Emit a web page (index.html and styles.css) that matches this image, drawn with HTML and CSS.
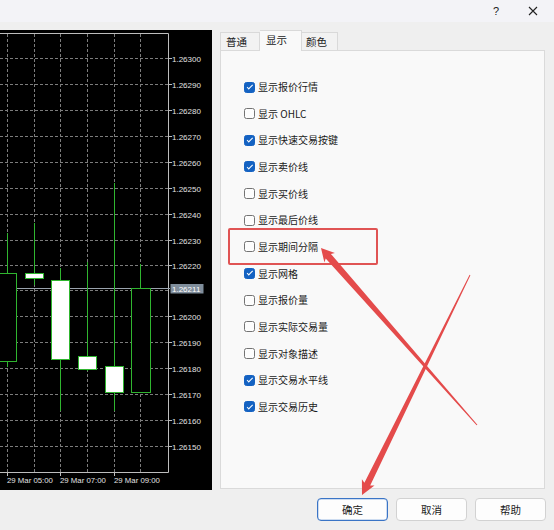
FILE: index.html
```html
<!DOCTYPE html>
<html lang="zh">
<head>
<meta charset="utf-8">
<title>属性</title>
<link rel="stylesheet" href="styles.css">
</head>
<body>
<div class="titlebar">
  <span class="tb-help">?</span>
  <span class="tb-close"><svg width="10" height="10" viewBox="0 0 10 10"><path d="M1 1 L9 9 M9 1 L1 9" stroke="#222" stroke-width="1.1" fill="none"/></svg></span>
</div>
<div class="main">
  <div class="chart">
    <svg class="chart-svg" width="212" height="460" viewBox="0 30 212 460">
      <g class="grid" stroke="#7c7c7c" stroke-width="1" stroke-dasharray="3 2" fill="none">
        <path d="M7.5 34 V472 M34.5 34 V472 M60.5 34 V472 M87.5 34 V472 M114.5 34 V472 M140.5 34 V472"/>
        <path d="M0 58.5 H168 M0 84.5 H168 M0 110.5 H168 M0 136.5 H168 M0 162.5 H168 M0 188.5 H168 M0 214.5 H168 M0 240.5 H168 M0 265.5 H168 M0 290.5 H168 M0 316.5 H168 M0 342.5 H168 M0 368.5 H168 M0 394.5 H168 M0 420.5 H168 M0 446.5 H168"/>
      </g>
      <path d="M0 33.5 H168.5 V472.5 H0" stroke="#bdbdbd" stroke-width="1" fill="none"/>
      <path d="M168.5 58.5 H172 M168.5 84.5 H172 M168.5 110.5 H172 M168.5 136.5 H172 M168.5 162.5 H172 M168.5 188.5 H172 M168.5 214.5 H172 M168.5 240.5 H172 M168.5 265.5 H172 M168.5 316.5 H172 M168.5 342.5 H172 M168.5 368.5 H172 M168.5 394.5 H172 M168.5 420.5 H172 M168.5 446.5 H172 M7.5 472.5 V476 M60.5 472.5 V476 M114.5 472.5 V476" stroke="#bdbdbd" stroke-width="1"/>
      <g class="prices" font-family="Liberation Sans, Arial, sans-serif" font-size="8" fill="#e2e2e2">
        <text x="172" y="61.5">1.26300</text>
        <text x="172" y="87.5">1.26290</text>
        <text x="172" y="113.5">1.26280</text>
        <text x="172" y="139.5">1.26270</text>
        <text x="172" y="165.5">1.26260</text>
        <text x="172" y="191.5">1.26250</text>
        <text x="172" y="217.5">1.26240</text>
        <text x="172" y="243.5">1.26230</text>
        <text x="172" y="268.5">1.26220</text>
        <text x="172" y="319.5">1.26200</text>
        <text x="172" y="345.5">1.26190</text>
        <text x="172" y="371.5">1.26180</text>
        <text x="172" y="397.5">1.26170</text>
        <text x="172" y="423.5">1.26160</text>
        <text x="172" y="449.5">1.26150</text>
      </g>
      <path d="M0 288.5 H170" stroke="#9aa3ad" stroke-width="1"/>
      <rect x="170.5" y="284" width="33" height="9.5" fill="#7f8d9b"/>
      <text x="172" y="291.5" font-family="Liberation Sans, Arial, sans-serif" font-size="8" fill="#ffffff">1.26211</text>
      <g class="candles" stroke="#2fb52f" stroke-width="1">
        <path d="M7.5 233 V367 M34.5 223 V285 M60.5 268 V411 M87.5 262 V371 M114.5 183 V411 M140.5 264 V289"/>
        <rect x="-1.5" y="273.5" width="18" height="88" fill="#000"/>
        <rect x="25.5" y="273.5" width="18" height="5" fill="#fff"/>
        <rect x="51.5" y="280.5" width="18" height="79" fill="#fff"/>
        <rect x="78.5" y="356.5" width="18" height="13" fill="#fff"/>
        <rect x="105.5" y="366.5" width="18" height="26" fill="#fff"/>
        <rect x="131.5" y="288.5" width="19" height="104" fill="#000"/>
      </g>
      <g class="times" font-family="Liberation Sans, Arial, sans-serif" font-size="7.8" fill="#e2e2e2">
        <text x="7" y="483">29 Mar 05:00</text>
        <text x="60" y="483">29 Mar 07:00</text>
        <text x="114" y="483">29 Mar 09:00</text>
      </g>
    </svg>
  </div>
  <div class="dialog">
    <div class="tabs">
      <div class="tab tab-general">普通</div>
      <div class="tab tab-display active">显示</div>
      <div class="tab tab-colors">颜色</div>
    </div>
    <div class="panel">
      <label class="row"><span class="cb on"></span><span class="lbl">显示报价行情</span></label>
      <label class="row"><span class="cb"></span><span class="lbl">显示 OHLC</span></label>
      <label class="row"><span class="cb on"></span><span class="lbl">显示快速交易按键</span></label>
      <label class="row"><span class="cb on"></span><span class="lbl">显示卖价线</span></label>
      <label class="row"><span class="cb"></span><span class="lbl">显示买价线</span></label>
      <label class="row"><span class="cb"></span><span class="lbl">显示最后价线</span></label>
      <label class="row"><span class="cb"></span><span class="lbl">显示期间分隔</span></label>
      <label class="row"><span class="cb on"></span><span class="lbl">显示网格</span></label>
      <label class="row"><span class="cb"></span><span class="lbl">显示报价量</span></label>
      <label class="row"><span class="cb"></span><span class="lbl">显示实际交易量</span></label>
      <label class="row"><span class="cb"></span><span class="lbl">显示对象描述</span></label>
      <label class="row"><span class="cb on"></span><span class="lbl">显示交易水平线</span></label>
      <label class="row"><span class="cb on"></span><span class="lbl">显示交易历史</span></label>
    </div>
    <div class="buttons">
      <button class="btn default">确定</button>
      <button class="btn">取消</button>
      <button class="btn">帮助</button>
    </div>
  </div>
</div>
<div class="highlight"></div>
<svg class="annot" width="554" height="530" viewBox="0 0 554 530">
  <polygon fill="#e44b4b" points="321,248 334.9,253.1 330.9,253.9 477.4,424.7 476.6,425.3 325.7,258.6 324.4,262.4"/>
  <polygon fill="#e44b4b" points="362,495 374.5,485.5 370.2,485.6 470.4,275.2 469.6,274.8 364.4,482.8 361.9,479.3"/>
</svg>
</body>
</html>
```

FILE: styles.css
```css
html, body {
  margin: 0;
  padding: 0;
}
body {
  width: 554px;
  height: 530px;
  background: #efefef;
  font-family: "Noto Sans CJK SC", "Noto Sans", sans-serif;
  color: #1a1a1a;
  position: relative;
  overflow: hidden;
}
.titlebar {
  height: 22px;
  background: #f3f3f7;
  display: flex;
  justify-content: flex-end;
  align-items: center;
  padding-right: 14px;
}
.tb-help {
  width: 14px;
  margin-right: 23px;
  text-align: center;
  font-family: "Liberation Sans", Arial, sans-serif;
  font-size: 11px;
  line-height: 14px;
  color: #222;
}
.tb-close {
  width: 14px;
  height: 14px;
  display: flex;
  align-items: center;
  justify-content: center;
}
.main {
  display: flex;
  margin-top: 8px;
}
.chart {
  width: 212px;
  height: 460px;
  background: #000;
  flex: none;
}
.chart-svg {
  display: block;
}
.dialog {
  margin-left: 8px;
  width: 326px;
  display: flex;
  flex-direction: column;
}
.tabs {
  display: flex;
  align-items: flex-start;
  height: 20px;
}
.tab {
  box-sizing: border-box;
  height: 18px;
  margin-top: 2px;
  padding-left: 5px;
  font-size: 10.5px;
  line-height: 17px;
  border: 1px solid #d9d9d9;
  border-bottom: none;
  background: #f2f2f2;
  white-space: nowrap;
}
.tab-general { width: 40px; }
.tab-display { width: 42px; padding-left: 6px; }
.tab-colors { width: 36px; padding-left: 4px; border-left: none; }
.tab.active {
  position: relative;
  z-index: 1;
  height: 21px;
  margin-top: 0;
  background: #f9f9f9;
  border-left: none;
}
.panel {
  box-sizing: border-box;
  width: 325px;
  height: 439px;
  border: 1px solid #dadada;
  background: #f9f9f9;
  padding: 22.7px 0 0 23px;
  display: flex;
  flex-direction: column;
}
.row {
  display: flex;
  align-items: center;
  height: 26.67px;
  gap: 3px;
  font-size: 10px;
  line-height: 12px;
}
.cb {
  box-sizing: border-box;
  width: 11px;
  height: 11px;
  border: 1px solid #737373;
  border-radius: 2.5px;
  background: #fdfdfd;
  position: relative;
  flex: none;
}
.cb.on {
  background: #1462c2;
  border-color: #1462c2;
}
.cb.on::after {
  content: "";
  position: absolute;
  left: 2.2px;
  top: 2.2px;
  width: 4.5px;
  height: 2.2px;
  border-left: 1.1px solid #fff;
  border-bottom: 1.1px solid #fff;
  transform: rotate(-45deg);
}
.lbl {
  white-space: nowrap;
}
.buttons {
  display: flex;
  justify-content: flex-end;
  gap: 8px;
  margin-top: 9px;
}
.btn {
  box-sizing: border-box;
  width: 71px;
  height: 23px;
  border: 1px solid #d2d2d2;
  border-radius: 4px;
  background: #fdfdfd;
  font-family: "Noto Sans CJK SC", "Noto Sans", sans-serif;
  font-size: 10.5px;
  color: #1a1a1a;
  padding: 0;
}
.btn.default {
  border-color: #3a74c6;
  box-shadow: inset 0 0 0 0.5px #9dbbe3;
}
.highlight {
  position: absolute;
  left: 228px;
  top: 228px;
  width: 150px;
  height: 37px;
  box-sizing: border-box;
  border: 2px solid #e05454;
  border-radius: 2px;
}
.annot {
  position: absolute;
  left: 0;
  top: 0;
  pointer-events: none;
}
```
